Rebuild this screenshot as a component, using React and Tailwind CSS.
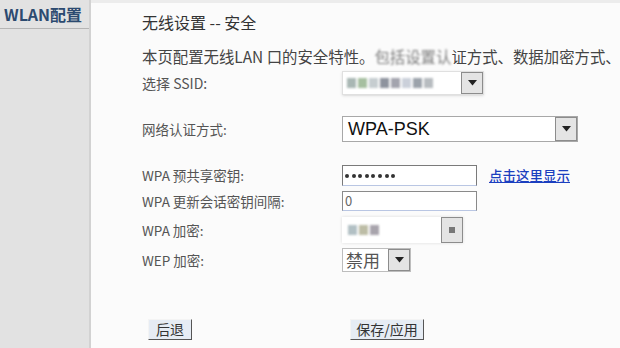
import React from 'react'

const font = { fontFamily: '"Noto Sans CJK SC", "Noto Sans", sans-serif' }

function Arrow({ small }) {
  return (
    <div className="flex h-full w-[22px] items-center justify-center border border-[#8c8c8c] bg-[#e4e4e4]">
      {small ? (
        <div className="h-[6px] w-[6px] bg-[#777]" />
      ) : (
        <svg width="9" height="6" viewBox="0 0 9 6">
          <path d="M0 0 H9 L4.5 5.5 Z" fill="#222" />
        </svg>
      )}
    </div>
  )
}

function Blur({ colors }) {
  return (
    <div className="flex items-center gap-[2px] blur-[1.2px]">
      {colors.map((c, i) => (
        <div key={i} className="h-[10px] w-[9px]" style={{ background: c }} />
      ))}
    </div>
  )
}

function Label({ children }) {
  return <div className="w-[200px] shrink-0 text-[13.5px] text-[#555]">{children}</div>
}

function Row({ className, children }) {
  return <div className={'flex items-center ' + className}>{children}</div>
}

function Button({ children, className }) {
  return (
    <button className={'flex h-[21px] items-center justify-center border border-t-[#f4f4f4] border-l-[#f4f4f4] border-b-[#555] border-r-[#555] bg-[#e6ecf4] text-[14px] text-[#333] ' + className}>
      {children}
    </button>
  )
}

export default function App() {
  return (
    <div className="flex h-[348px] w-[620px] overflow-hidden bg-[#fbfbfb]" style={font}>
      <aside className="h-full w-[91px] shrink-0 border-r-2 border-[#d2d2d2] bg-[#e2e2e2]">
        <div className="flex h-[29px] items-center border-b border-[#b5b5b5] pl-[4px] text-[16px] font-bold text-[#2c4a70]">
          WLAN配置
        </div>
      </aside>
      <main className="flex-1 border-t-[3px] border-[#ececec] pl-[51px]">
        <div className="mt-[9px] flex h-[20px] items-center text-[16px] text-[#333]">无线设置 -- 安全</div>
        <div className="mt-[15px] flex h-[20px] items-center whitespace-nowrap text-[15.4px] text-[#444]">
          本页配置无线LAN 口的安全特性。 <span className="opacity-70 blur-[0.8px]">包括设置认</span>证方式、数据加密方式、
        </div>
        <Row className="mt-[4px] h-[24px]">
          <div className="w-[200px] shrink-0 text-[14px] text-[#555]">选择 SSID:</div>
          <div className="flex h-full w-[142px] items-center justify-between border border-[#e0e0e0] bg-white pl-[4px] shadow-sm">
            <Blur colors={['#a9b7b4', '#a6bfa0', '#c6cdd0', '#8e939e', '#a3a4ae', '#cbd0da', '#9ca3ab', '#b7bcc0']} />
            <Arrow />
          </div>
        </Row>
        <Row className="mt-[21px] h-[26px]">
          <Label>网络认证方式:</Label>
          <div className="flex h-full w-[236px] items-center justify-between border border-[#a8a8a8] bg-white pl-[5px]">
            <span className="text-[18px] text-[#111]" style={{ fontFamily: '"Liberation Sans", Arial, sans-serif' }}>WPA-PSK</span>
            <Arrow />
          </div>
        </Row>
        <Row className="mt-[23px] h-[21px]">
          <Label>WPA 预共享密钥:</Label>
          <div className="flex h-full w-[135px] items-center gap-[2.6px] border border-[#7a7a7a] border-b-[#b9c6e3] bg-white pl-[2px]">
            {[0, 1, 2, 3, 4, 5, 6, 7].map((i) => (
              <div key={i} className="h-[4px] w-[4px] rounded-full bg-[#333]" />
            ))}
          </div>
          <a className="ml-[12px] text-[13.5px] font-medium text-[#1b3fbf] underline">点击这里显示</a>
        </Row>
        <Row className="mt-[5px] h-[20px]">
          <Label>WPA 更新会话密钥间隔:</Label>
          <div className="flex h-full w-[135px] items-center border border-[#8a8a8a] border-b-[#b9c6e3] bg-white pl-[2px] text-[13px] text-[#666]">
            0
          </div>
        </Row>
        <Row className="mt-[6px] h-[26px]">
          <Label>WPA 加密:</Label>
          <div className="flex h-full w-[121px] items-center justify-between bg-white pl-[6px] shadow-[0_0_3px_#ddd]">
            <Blur colors={['#b2c0c4', '#bdbda6', '#a8a4ac']} />
            <Arrow small />
          </div>
        </Row>
        <Row className="mt-[5px] h-[24px]">
          <Label>WEP 加密:</Label>
          <div className="flex h-full w-[69px] items-center justify-between border border-[#bdbdbd] bg-white pl-[3px]">
            <span className="text-[17px] text-[#555]">禁用</span>
            <Arrow />
          </div>
        </Row>
        <Row className="mt-[47px] h-[21px]">
          <Button className="ml-[6px] w-[44px]">后退</Button>
          <Button className="ml-[158px] w-[74px]">保存/应用</Button>
        </Row>
      </main>
    </div>
  )
}
